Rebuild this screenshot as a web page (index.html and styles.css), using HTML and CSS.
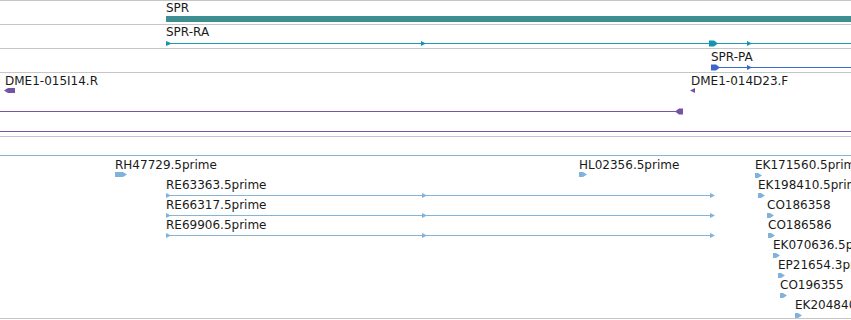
FILE: index.html
```html
<!DOCTYPE html>
<html lang="en">
<head>
    <meta charset="UTF-8">
    <title>SPR region</title>
    <link rel="stylesheet" href="styles.css">
</head>
<body>
    <div class="tracks">
        <!-- gene -->
        <div class="track">
            <svg width="851" height="23">
                <text x="166" y="11">SPR</text>
                <rect class="gene" x="166" y="15" width="685" height="6"/>
            </svg>
        </div>

        <!-- transcript RA -->
        <div class="track">
            <svg width="851" height="23">
                <text x="166" y="11">SPR-RA</text>
                <line class="ra" x1="166" y1="18.5" x2="851" y2="18.5"/>
                <polygon class="ra-fill" points="166,16 172,18.5 166,21"/>
                <polygon class="ra-fill" points="421,16 426,18.5 421,21"/>
                <polygon class="ra-fill" points="709,15.5 714,15.5 718,18.5 714,21.5 709,21.5"/>
                <polygon class="ra-fill" points="747,16 752,18.5 747,21"/>
            </svg>
        </div>

        <!-- transcript PA -->
        <div class="track">
            <svg width="851" height="23">
                <text x="711" y="12">SPR-PA</text>
                <line class="pa" x1="711" y1="18.5" x2="851" y2="18.5"/>
                <polygon class="pa-fill" points="711,15.5 716,15.5 720,18.5 716,21.5 711,21.5"/>
                <polygon class="pa-fill" points="747,16 752,18.5 747,21"/>
            </svg>
        </div>

        <!-- BAC ends -->
        <div class="track">
            <svg width="851" height="63">
                <text x="5" y="12">DME1-015I14.R</text>
                <polygon class="bac-fill" points="4,17.5 8,15 15,15 15,20 8,20"/>
                <text x="691" y="12">DME1-014D23.F</text>
                <polygon class="bac-fill" points="690,17.5 695,15 695,20"/>
                <line class="bac" x1="0" y1="38.5" x2="677" y2="38.5"/>
                <polygon class="bac-fill" points="675,38.5 679,35.5 683,35.5 683,41.5 679,41.5"/>
                <line class="bac" x1="0" y1="58.5" x2="851" y2="58.5"/>
            </svg>
        </div>

        <!-- ESTs -->
        <div class="track">
            <svg width="851" height="181">
                <line class="est" x1="0" y1="18.5" x2="851" y2="18.5"/>

                <text x="115" y="32">RH47729.5prime</text>
                <polygon class="est-fill" points="115,35 123,35 127,37.5 123,40 115,40"/>
                <text x="579" y="32">HL02356.5prime</text>
                <polygon class="est-fill" points="579,35 583,35 587,37.5 583,40 579,40"/>
                <text x="755" y="32">EK171560.5prime</text>
                <polygon class="est-fill" points="755,36 758,36 762,38.5 758,41 755,41"/>

                <text x="166" y="52">RE63363.5prime</text>
                <line class="est" x1="166" y1="58.5" x2="714" y2="58.5"/>
                <polygon class="est-fill" points="166,56 171,58.5 166,61"/>
                <polygon class="est-fill" points="422,56 427,58.5 422,61"/>
                <polygon class="est-fill" points="710,56 715,58.5 710,61"/>
                <text x="758" y="52">EK198410.5prime</text>
                <polygon class="est-fill" points="758,56 761,56 765,58.5 761,61 758,61"/>

                <text x="166" y="72">RE66317.5prime</text>
                <line class="est" x1="166" y1="78.5" x2="714" y2="78.5"/>
                <polygon class="est-fill" points="166,76 171,78.5 166,81"/>
                <polygon class="est-fill" points="422,76 427,78.5 422,81"/>
                <polygon class="est-fill" points="710,76 715,78.5 710,81"/>
                <text x="767" y="72">CO186358</text>
                <polygon class="est-fill" points="767,76 770,76 774,78.5 770,81 767,81"/>

                <text x="166" y="92">RE69906.5prime</text>
                <line class="est" x1="166" y1="98.5" x2="714" y2="98.5"/>
                <polygon class="est-fill" points="166,96 171,98.5 166,101"/>
                <polygon class="est-fill" points="422,96 427,98.5 422,101"/>
                <polygon class="est-fill" points="710,96 715,98.5 710,101"/>
                <text x="768" y="92">CO186586</text>
                <polygon class="est-fill" points="768,96 771,96 775,98.5 771,101 768,101"/>

                <text x="773" y="112">EK070636.5prime</text>
                <polygon class="est-fill" points="773,116 776,116 780,118.5 776,121 773,121"/>

                <text x="778" y="132">EP21654.3prime</text>
                <polygon class="est-fill" points="778,136 781,136 785,138.5 781,141 778,141"/>

                <text x="780" y="152">CO196355</text>
                <polygon class="est-fill" points="780,156 783,156 787,158.5 783,161 780,161"/>

                <text x="795" y="172">EK204840.5prime</text>
                <polygon class="est-fill" points="795,176 798,176 802,178.5 798,181 795,181"/>
            </svg>
        </div>
    </div>
</body>
</html>
```

FILE: styles.css
```css
body {
    margin: 0;
    background: #fff;
    overflow: hidden;
}

.tracks {
    width: 851px;
    border-top: 1px solid #c6c6c6;
}

.track {
    border-bottom: 1px solid #c6c6c6;
}

.track svg {
    display: block;
}

.track text {
    font-family: "DejaVu Sans", sans-serif;
    font-size: 12px;
    fill: #1a1a1a;
}

line {
    stroke-width: 1;
    shape-rendering: crispEdges;
}

.gene {
    fill: #3e8f91;
}

.ra {
    stroke: #1f9ab4;
}

.ra-fill {
    fill: #1596b0;
}

.pa {
    stroke: #3d6cc8;
}

.pa-fill {
    fill: #3a68cc;
}

.bac {
    stroke: #7558a3;
}

.bac-fill {
    fill: #7353a3;
}

.est {
    stroke: #86b3d8;
}

.est-fill {
    fill: #80b2dc;
}
```
